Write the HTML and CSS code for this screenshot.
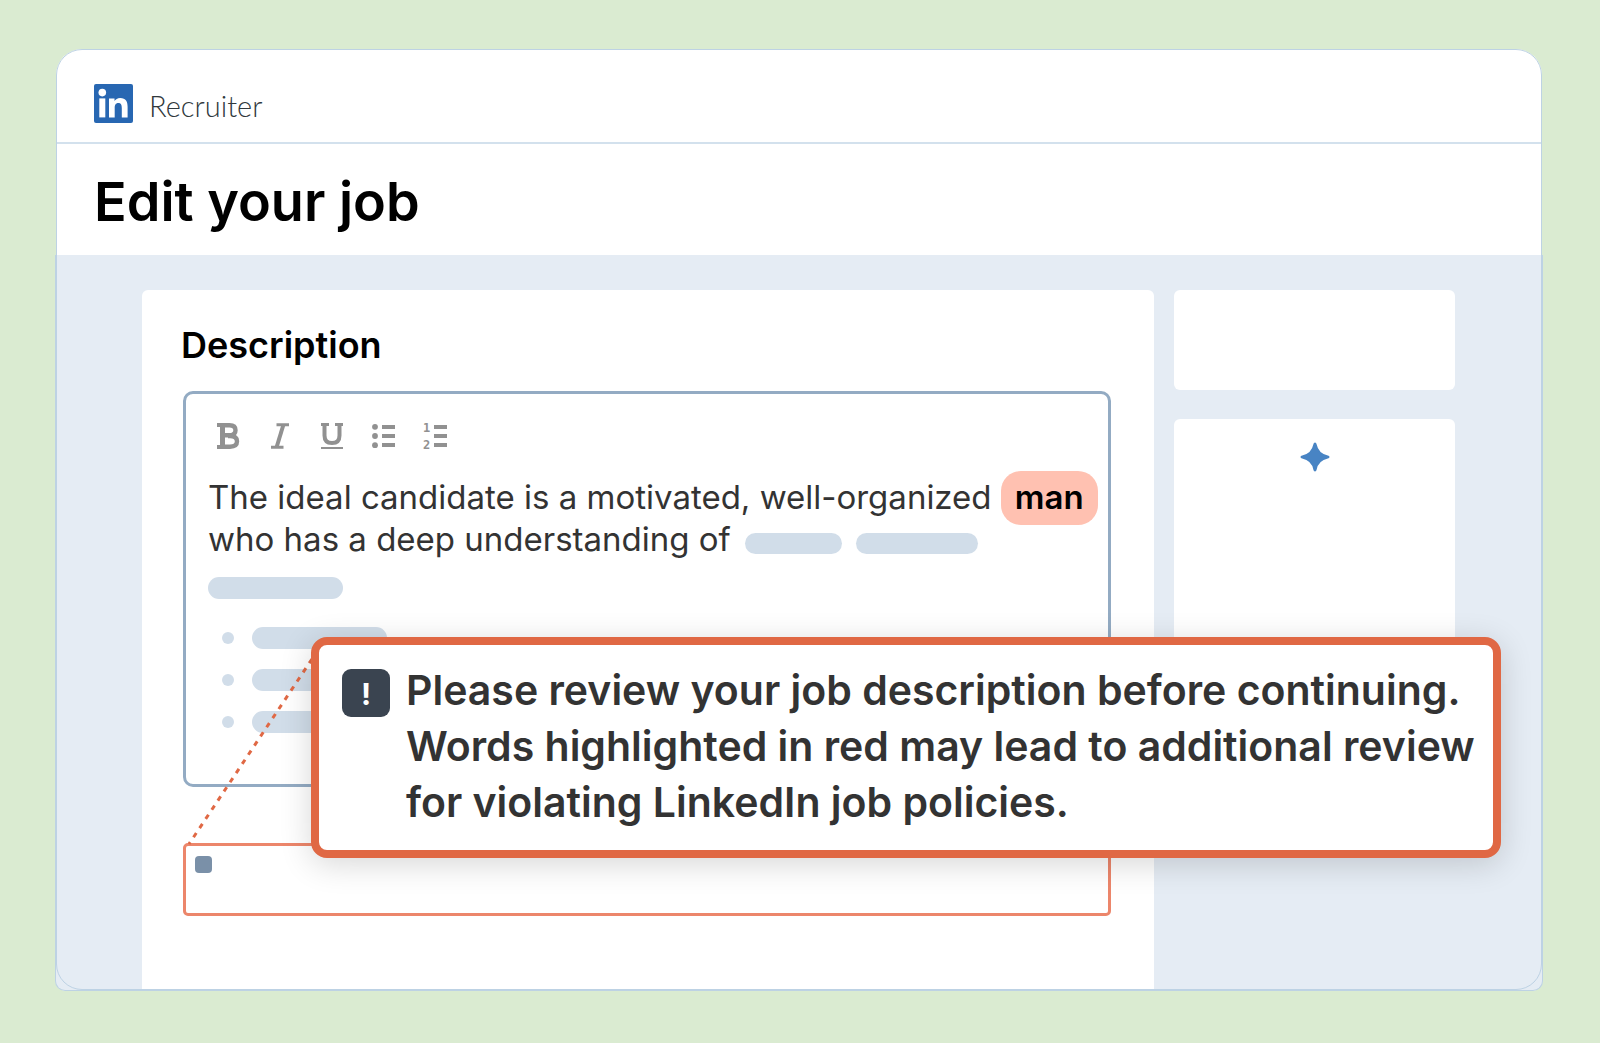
FILE: index.html
```html
<!DOCTYPE html>
<html lang="en">
<head>
<meta charset="utf-8">
<meta name="viewport" content="width=device-width, initial-scale=1">
<title>Recruiter – Edit your job</title>
<link rel="stylesheet" href="styles.css">
</head>
<body>
<div class="window">
  <header class="brand">
    <svg class="brand-logo" viewBox="0 0 39 39" role="img" aria-label="LinkedIn">
      <rect width="39" height="39" rx="2" fill="#2867b2"/>
      <circle cx="8.3" cy="8.6" r="3.8" fill="#fff"/>
      <rect x="5.3" y="14.4" width="6" height="19" fill="#fff"/>
      <path d="M15 14.400h5.500v2.600c.9-1.700 3-3.100 5.700-3.100 5.800 0 7.400 3.500 7.400 8.900v10.600h-5.800v-9.500c0-2.700-.6-4.900-3.400-4.900-2.900 0-3.700 2.200-3.700 4.900v9.500H15z" fill="#fff"/>
    </svg>
    <span class="brand-name">Recruiter</span>
  </header>
  <div class="title-bar">
    <h1 class="title">Edit your job</h1>
  </div>
  <div class="workspace">
    <main class="panel">
      <h2 class="panel-title" id="desc-label">Description</h2>
      <div class="editor">
        <div class="toolbar" role="toolbar" aria-label="Formatting">
          <button class="tool" type="button" aria-label="Bold">
            <svg class="tool-icon" viewBox="0 0 26 26" fill="none" stroke="currentColor">
              <path d="M2 2H14M2 24H15" stroke-width="4"/>
              <path d="M7.500 1v24" stroke-width="5"/>
              <path d="M7 2.200h7.500q6 0 6 5t-6 5H7M13 13h2q7 0 7 5.300T15 23.800H7" stroke-width="4.400"/>
            </svg>
          </button>
          <button class="tool" type="button" aria-label="Italic">
            <svg class="tool-icon" viewBox="0 0 26 26" fill="none" stroke="currentColor">
              <path d="M9.500 1.800H22M4 24.200h12.500" stroke-width="3"/>
              <path d="M16.500 1.500L9.500 24.500" stroke-width="4"/>
            </svg>
          </button>
          <button class="tool" type="button" aria-label="Underline">
            <svg class="tool-icon" viewBox="0 0 26 26" fill="none" stroke="currentColor">
              <path d="M2 1.500h8M16 1.500h8" stroke-width="3"/>
              <path d="M5.500 1v11.500q0 7.500 7.500 7.500t7.500-7.500V1" stroke-width="4"/>
              <path d="M2 25h22" stroke-width="2"/>
            </svg>
          </button>
          <button class="tool" type="button" aria-label="Bulleted list">
            <svg class="tool-icon" viewBox="0 0 26 26" fill="currentColor">
              <circle cx="4" cy="3.800" r="2.900"/><circle cx="4" cy="13" r="2.900"/><circle cx="4" cy="22.200" r="2.900"/>
              <path d="M11 2h13v4H11zM11 11h13v4H11zM11 20h13v4H11z"/>
            </svg>
          </button>
          <button class="tool" type="button" aria-label="Numbered list">
            <svg class="tool-icon" viewBox="0 0 26 26" fill="currentColor">
              <text class="tool-digit" x="0" y="9">1</text>
              <text class="tool-digit" x="0" y="26">2</text>
              <path d="M11 2h13v4H11zM11 11h13v4H11zM11 20h13v4H11z"/>
            </svg>
          </button>
        </div>
        <div class="copy" role="textbox" aria-multiline="true" aria-labelledby="desc-label" tabindex="0">
          <p class="copy-text">The ideal candidate is a motivated, well-organized <mark class="flag">man</mark><br>who has a deep understanding of <span class="bar bar-short"></span><span class="bar bar-mid"></span></p>
          <div class="block"></div>
          <ul class="points">
            <li class="point"><span class="dot"></span><span class="block"></span></li>
            <li class="point"><span class="dot"></span><span class="block"></span></li>
            <li class="point"><span class="dot"></span><span class="block"></span></li>
          </ul>
        </div>
      </div>
      <div class="notice"><span class="notice-mark"></span></div>
    </main>
    <aside class="side">
      <div class="side-card side-card-top"></div>
      <div class="side-card side-card-main">
        <svg class="spark" viewBox="0 0 30 30" aria-hidden="true"><path d="M15 .500q1.300 0 1.600 1.700Q18.500 11.500 27.800 13.400q1.700.3 1.700 1.600t-1.700 1.600Q18.500 18.500 16.600 27.800q-.3 1.700-1.600 1.700t-1.600-1.700Q11.500 18.500 2.200 16.600.5 16.300.5 15t1.700-1.600Q11.500 11.500 13.400 2.200 13.700.5 15 .5z" fill="#4884c4"/></svg>
      </div>
    </aside>
    <svg class="leader" viewBox="0 0 126 188" aria-hidden="true"><path d="M125 2L2 187" fill="none" stroke="#e06844" stroke-width="3" stroke-dasharray="5 6"/></svg>
    <div class="callout" role="alert">
      <span class="callout-icon">!</span>
      <p class="callout-text">Please review your job description before continuing.<br>Words highlighted in red may lead to additional review<br>for violating LinkedIn job policies.</p>
    </div>
  </div>
</div>
</body>
</html>
```
FILE: styles.css
```css
* { box-sizing: border-box; }

body {
  margin: 0;
  min-height: 100vh;
  padding: 49px 58px 52px 56px;
  display: flex;
  background: #daebd1;
  color: #333;
  font-family: Inter, "Liberation Sans", sans-serif;
}

h1, h2, p, ul { margin: 0; padding: 0; }

.window {
  position: relative;
  flex: 1;
  display: flex;
  flex-direction: column;
  background: #fff;
  border-radius: 26px 26px 10px 10px;
}

/* rounded outline over the whole window */
.window::after {
  content: "";
  position: absolute;
  inset: 0 0 1px;
  border: 1px solid #bdd2e4;
  border-radius: 26px;
  pointer-events: none;
}

.brand {
  display: flex;
  align-items: center;
  gap: 16px;
  height: 95px;
  padding: 16px 38px 0;
  border-bottom: 2px solid #d3e1ed;
}
.brand-logo { width: 39px; height: 39px; }
.brand-name {
  padding-top: 4px;
  color: #30383c;
  font: 300 29px/36px Lato, sans-serif;
}

.title-bar {
  padding: 24px 38px 19px;
}
.title {
  color: #000;
  font-size: 54px;
  font-weight: 600;
  line-height: 68px;
}

.workspace {
  position: relative;
  flex: 1;
  display: flex;
  gap: 20px;
  margin: 0 -1px;
  padding: 35px 87px 0 86px;
  background: #e5ecf4;
  border: solid #bdd2e4;
  border-width: 0 1px 1px;
  border-radius: 0 0 10px 10px;
}

.panel {
  flex: 1;
  min-width: 0;
  padding: 35px 43px 72px 39px;
  background: #fff;
  border-radius: 6px 6px 0 0;
}
.panel-title {
  color: #000;
  font-size: 36px;
  font-weight: 600;
  line-height: 40px;
}

.editor {
  min-height: 396px;
  margin: 26px 0 0 2px;
  padding: 24px 0;
  border: 3px solid #93abc3;
  border-radius: 10px;
}
.toolbar { display: flex; padding-left: 16px; }
.tool {
  display: grid;
  place-items: center;
  width: 52px;
  height: 36px;
  padding: 0;
  border: 0;
  background: none;
  color: #919191;
}
.tool-icon { width: 26px; height: 26px; overflow: visible; }
.tool-digit { font: 700 12px "DejaVu Sans Mono", monospace; }

.copy { padding: 22px 0 0 22px; }
.copy-text {
  font-size: 33px;
  line-height: 42px;
  white-space: nowrap;
}
.flag {
  padding: 6px 14px 8px;
  background: #ffc1b1;
  border-radius: 20px;
  color: #000;
  font-weight: 600;
}
.bar {
  display: inline-block;
  height: 21px;
  margin-left: 5px;
  background: #d1dde9;
  border-radius: 11px;
  vertical-align: -3px;
}
.bar-short { width: 97px; }
.bar-mid { width: 122px; margin-left: 14px; }
.block {
  width: 135px;
  height: 22px;
  background: #d1dde9;
  border-radius: 11px;
}
.copy > .block { margin-top: 17px; }
.points {
  display: grid;
  gap: 20px;
  padding: 28px 0 0 14px;
  list-style: none;
}
.point { display: flex; align-items: center; gap: 18px; }
.dot {
  width: 12px;
  height: 12px;
  background: #d1dde9;
  border-radius: 50%;
}

.notice {
  height: 73px;
  margin: 56px 0 0 2px;
  padding: 10px 9px;
  border: 3px solid #ec866b;
  border-radius: 5px;
}
.notice-mark {
  display: block;
  width: 17px;
  height: 17px;
  background: #7a90a8;
  border-radius: 4px;
}

.side {
  flex: 0 0 281px;
  display: flex;
  flex-direction: column;
  gap: 29px;
}
.side-card { background: #fff; border-radius: 6px; }
.side-card-top { height: 100px; }
.side-card-main {
  height: 300px;
  padding-top: 23px;
  text-align: center;
}
.spark { width: 30px; height: 30px; }

.leader {
  position: absolute;
  top: 402px;
  left: 131px;
  width: 126px;
  height: 188px;
}
.callout {
  position: absolute;
  top: 382px;
  left: 255px;
  right: 41px;
  display: flex;
  gap: 16px;
  padding: 17px 0 20px 23px;
  background: #fff;
  border: 8px solid #e06844;
  border-radius: 16px;
  box-shadow: 0 6px 32px rgba(0, 0, 0, .16);
}
.callout-icon {
  flex: none;
  width: 48px;
  height: 48px;
  margin-top: 7px;
  background: #3a4450;
  border-radius: 9px;
  color: #fff;
  font-size: 30px;
  font-weight: 700;
  line-height: 50px;
  text-align: center;
}
.callout-text {
  font-size: 41px;
  font-weight: 600;
  line-height: 56px;
  white-space: nowrap;
}
```
